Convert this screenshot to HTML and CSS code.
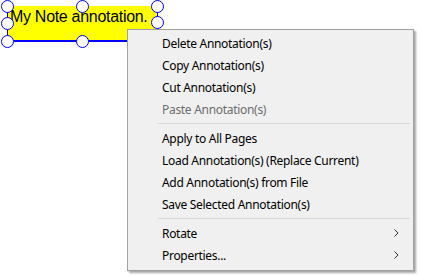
FILE: index.html
```html
<!DOCTYPE html>
<html lang="en">
<head>
    <meta charset="UTF-8">
    <title>Annotation Menu</title>
    <link rel="stylesheet" href="styles.css">
</head>
<body>
    <div class="page">
        <div class="note">
            <span class="note-text">My Note annotation.</span>
            <span class="handle h-tl"></span>
            <span class="handle h-tm"></span>
            <span class="handle h-tr"></span>
            <span class="handle h-ml"></span>
            <span class="handle h-mr"></span>
            <span class="handle h-bl"></span>
            <span class="handle h-bm"></span>
            <span class="handle h-br"></span>
        </div>

        <div class="menu">
            <div class="item">Delete Annotation(s)</div>
            <div class="item">Copy Annotation(s)</div>
            <div class="item">Cut Annotation(s)</div>
            <div class="item disabled">Paste Annotation(s)</div>
            <div class="sep"></div>
            <div class="item">Apply to All Pages</div>
            <div class="item">Load Annotation(s) (Replace Current)</div>
            <div class="item">Add Annotation(s) from File</div>
            <div class="item">Save Selected Annotation(s)</div>
            <div class="sep"></div>
            <div class="item">Rotate
                <svg class="arrow" width="5" height="8" viewBox="0 0 5 8"><path d="M0.5 0.5 L4 4 L0.5 7.5" fill="none" stroke="#333" stroke-width="1"/></svg>
            </div>
            <div class="item">Properties...
                <svg class="arrow" width="5" height="8" viewBox="0 0 5 8"><path d="M0.5 0.5 L4 4 L0.5 7.5" fill="none" stroke="#333" stroke-width="1"/></svg>
            </div>
        </div>
    </div>
</body>
</html>
```

FILE: styles.css
```css
body {
    margin: 0;
    background: white;
}

.page {
    position: relative;
    width: 421px;
    height: 276px;
    overflow: hidden;
}

/* the annotation sits on the page canvas */
.note {
    position: absolute;
    left: 7px;
    top: 6px;
    width: 151px;
    height: 36px;
    background: #ffff00;
    border-left: 1px solid #0000ff;
    border-right: 1px solid #0000ff;
    border-bottom: 2px solid #0000ff;
    box-sizing: border-box;
}

.note-text {
    display: block;
    padding: 2px 0 0 2px;
    font-family: "Liberation Sans", Arial, sans-serif;
    font-size: 16px;
    letter-spacing: -0.3px;
    color: black;
}

.handle {
    position: absolute;
    width: 13px;
    height: 13px;
    border: 1px solid #0000ff;
    border-radius: 50%;
    background: white;
    box-sizing: border-box;
}

.h-tl { left: -7px; top: -6px; }
.h-tm { left: 68px; top: -6px; }
.h-tr { left: 143px; top: -6px; }
.h-ml { left: -7px; top: 11px; }
.h-mr { left: 143px; top: 10px; }
.h-bl { left: -7px; top: 29px; }
.h-bm { left: 68px; top: 29px; }
.h-br { left: 143px; top: 29px; }

/* context menu */
.menu {
    position: absolute;
    left: 127px;
    top: 29px;
    width: 287px;
    padding: 2px 2px 4px;
    background: #f0f0f0;
    border: 1px solid #a0a0a0;
    box-shadow: 2px 2px 2px rgba(0, 0, 0, 0.35);
    box-sizing: border-box;
    font-family: "Noto Sans", "Open Sans", sans-serif;
    font-size: 12px;
    letter-spacing: -0.3px;
    color: black;
}

.item {
    display: flex;
    align-items: center;
    justify-content: space-between;
    height: 22px;
    padding: 0 12px 0 32px;
}

.item.disabled {
    color: #6d6d6d;
}

.sep {
    height: 1px;
    margin: 3px 1px 3px 28px;
    background: #d7d7d7;
}
```
